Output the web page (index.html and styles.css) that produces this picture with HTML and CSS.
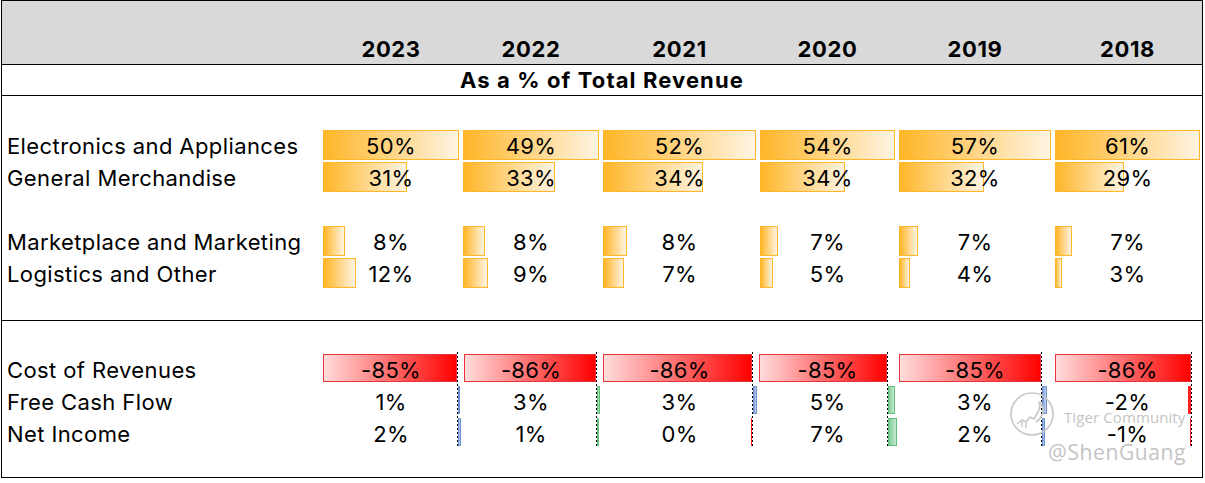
FILE: index.html
```html
<!DOCTYPE html>
<html>
<head>
<meta charset="utf-8">
<link rel="stylesheet" href="styles.css">
</head>
<body>
<div class="sheet">
  <div class="row head">
    <div class="lab"></div>
    <div class="yr">2023</div><div class="yr">2022</div><div class="yr">2021</div><div class="yr">2020</div><div class="yr">2019</div><div class="yr">2018</div>
  </div>
  <div class="row title">As a % of Total Revenue</div>
  <div class="row blank"></div>

  <div class="row">
    <div class="lab">Electronics and Appliances</div>
    <div class="cell"><div class="track"><div class="bar ob" style="width:100%"></div></div><span class="val">50%</span></div>
    <div class="cell"><div class="track"><div class="bar ob" style="width:100%"></div></div><span class="val">49%</span></div>
    <div class="cell"><div class="track"><div class="bar ob" style="width:100%"></div></div><span class="val">52%</span></div>
    <div class="cell"><div class="track"><div class="bar ob" style="width:100%"></div></div><span class="val">54%</span></div>
    <div class="cell"><div class="track"><div class="bar ob" style="width:100%"></div></div><span class="val">57%</span></div>
    <div class="cell"><div class="track"><div class="bar ob" style="width:100%"></div></div><span class="val">61%</span></div>
  </div>
  <div class="row">
    <div class="lab">General Merchandise</div>
    <div class="cell"><div class="track"><div class="bar ob" style="width:62%"></div></div><span class="val">31%</span></div>
    <div class="cell"><div class="track"><div class="bar ob" style="width:67.3%"></div></div><span class="val">33%</span></div>
    <div class="cell"><div class="track"><div class="bar ob" style="width:65.4%"></div></div><span class="val">34%</span></div>
    <div class="cell"><div class="track"><div class="bar ob" style="width:63%"></div></div><span class="val">34%</span></div>
    <div class="cell"><div class="track"><div class="bar ob" style="width:56.1%"></div></div><span class="val">32%</span></div>
    <div class="cell"><div class="track"><div class="bar ob" style="width:47.5%"></div></div><span class="val">29%</span></div>
  </div>
  <div class="row blank"></div>
  <div class="row">
    <div class="lab">Marketplace and Marketing</div>
    <div class="cell"><div class="track"><div class="bar ob" style="width:16%"></div></div><span class="val">8%</span></div>
    <div class="cell"><div class="track"><div class="bar ob" style="width:16.3%"></div></div><span class="val">8%</span></div>
    <div class="cell"><div class="track"><div class="bar ob" style="width:15.4%"></div></div><span class="val">8%</span></div>
    <div class="cell"><div class="track"><div class="bar ob" style="width:13%"></div></div><span class="val">7%</span></div>
    <div class="cell"><div class="track"><div class="bar ob" style="width:12.3%"></div></div><span class="val">7%</span></div>
    <div class="cell"><div class="track"><div class="bar ob" style="width:11.5%"></div></div><span class="val">7%</span></div>
  </div>
  <div class="row">
    <div class="lab">Logistics and Other</div>
    <div class="cell"><div class="track"><div class="bar ob" style="width:24%"></div></div><span class="val">12%</span></div>
    <div class="cell"><div class="track"><div class="bar ob" style="width:18.4%"></div></div><span class="val">9%</span></div>
    <div class="cell"><div class="track"><div class="bar ob" style="width:13.5%"></div></div><span class="val">7%</span></div>
    <div class="cell"><div class="track"><div class="bar ob" style="width:9.3%"></div></div><span class="val">5%</span></div>
    <div class="cell"><div class="track"><div class="bar ob" style="width:7%"></div></div><span class="val">4%</span></div>
    <div class="cell"><div class="track"><div class="bar ob" style="width:4.9%"></div></div><span class="val">3%</span></div>
  </div>
  <div class="row blank sep"></div>
  <div class="row blank short"></div>

  <div class="row">
    <div class="lab">Cost of Revenues</div>
    <div class="cell"><div class="track2"><div class="neg" style="width:136px"><div class="bar rb" style="width:134px"></div></div><div class="axis"></div><div class="pos"></div></div><span class="val">-85%</span></div>
    <div class="cell"><div class="track2"><div class="neg" style="width:135px"><div class="bar rb" style="width:132px"></div></div><div class="axis"></div><div class="pos"></div></div><span class="val">-86%</span></div>
    <div class="cell"><div class="track2"><div class="neg" style="width:151px"><div class="bar rb" style="width:149px"></div></div><div class="axis"></div><div class="pos"></div></div><span class="val">-86%</span></div>
    <div class="cell"><div class="track2"><div class="neg" style="width:129px"><div class="bar rb" style="width:128px"></div></div><div class="axis"></div><div class="pos"></div></div><span class="val">-85%</span></div>
    <div class="cell"><div class="track2"><div class="neg" style="width:144px"><div class="bar rb" style="width:142px"></div></div><div class="axis"></div><div class="pos"></div></div><span class="val">-85%</span></div>
    <div class="cell"><div class="track2"><div class="neg" style="width:138px"><div class="bar rb" style="width:136px"></div></div><div class="axis"></div><div class="pos"></div></div><span class="val">-86%</span></div>
  </div>
  <div class="row">
    <div class="lab">Free Cash Flow</div>
    <div class="cell"><div class="track2"><div class="neg" style="width:136px"></div><div class="axis"></div><div class="pos"><div class="bar bb" style="width:2px"></div></div></div><span class="val">1%</span></div>
    <div class="cell"><div class="track2"><div class="neg" style="width:135px"></div><div class="axis"></div><div class="pos"><div class="bar gb" style="width:3px"></div></div></div><span class="val">3%</span></div>
    <div class="cell"><div class="track2"><div class="neg" style="width:151px"></div><div class="axis"></div><div class="pos"><div class="bar bb" style="width:4px"></div></div></div><span class="val">3%</span></div>
    <div class="cell"><div class="track2"><div class="neg" style="width:129px"></div><div class="axis"></div><div class="pos"><div class="bar gb" style="width:7px"></div></div></div><span class="val">5%</span></div>
    <div class="cell"><div class="track2"><div class="neg" style="width:144px"></div><div class="axis"></div><div class="pos"><div class="bar bb" style="width:5px"></div></div></div><span class="val">3%</span></div>
    <div class="cell"><div class="track2"><div class="neg" style="width:138px"><div class="bar rs" style="width:3px"></div></div><div class="axis"></div><div class="pos"></div></div><span class="val">-2%</span></div>
  </div>
  <div class="row">
    <div class="lab">Net Income</div>
    <div class="cell"><div class="track2"><div class="neg" style="width:136px"></div><div class="axis"></div><div class="pos"><div class="bar bb" style="width:3px"></div></div></div><span class="val">2%</span></div>
    <div class="cell"><div class="track2"><div class="neg" style="width:135px"></div><div class="axis"></div><div class="pos"><div class="bar gb" style="width:1px"></div></div></div><span class="val">1%</span></div>
    <div class="cell"><div class="track2"><div class="neg" style="width:151px"><div class="bar rs" style="width:1px"></div></div><div class="axis"></div><div class="pos"></div></div><span class="val">0%</span></div>
    <div class="cell"><div class="track2"><div class="neg" style="width:129px"></div><div class="axis"></div><div class="pos"><div class="bar gb" style="width:9px"></div></div></div><span class="val">7%</span></div>
    <div class="cell"><div class="track2"><div class="neg" style="width:144px"></div><div class="axis"></div><div class="pos"><div class="bar bb" style="width:3px"></div></div></div><span class="val">2%</span></div>
    <div class="cell"><div class="track2"><div class="neg" style="width:138px"><div class="bar rs" style="width:1px"></div></div><div class="axis"></div><div class="pos"></div></div><span class="val">-1%</span></div>
  </div>
  <div class="row blank last"></div>

  <div class="watermark">
    <div class="wm-top">
      <svg class="wm-logo" width="48" height="48" viewBox="0 0 48 48">
        <circle cx="24" cy="24" r="21" fill="none" stroke="#c8c8c8" stroke-width="1.6"/>
        <path d="M9 34 L14 30 L18 32 L22 27 L26 29 L30 22 Q33 17 31 12 Q36 15 35 22 Q34 28 28 32" fill="none" stroke="#c8c8c8" stroke-width="1.6" stroke-linejoin="round"/>
        <path d="M14 30 L14 37 M18 32 L18 38" fill="none" stroke="#c8c8c8" stroke-width="1.4"/>
      </svg>
      <span class="wm-name">Tiger Community</span>
    </div>
    <div class="wm-user">@ShenGuang</div>
  </div>
</div>
</body>
</html>
```
FILE: styles.css
```css
* { box-sizing: border-box; }
html, body { margin: 0; padding: 0; background: #fff; }
body { font-family: Inter, "Noto Sans", sans-serif; color: #000; }

.sheet {
  position: relative;
  margin-left: 1px;
  width: 1202px;
  border: 1px solid #000;
}

.row {
  display: grid;
  grid-template-columns: 319px 140px 140px 157px 139px 156px 149px;
  height: 32px;
}

.head {
  height: 64px;
  background: #d9d9d9;
  border-bottom: 1px solid #000;
  align-items: end;
  padding-bottom: 3px;
}
.yr {
  text-align: center;
  font-weight: 700;
  font-size: 22px;
  letter-spacing: 0.6px;
  line-height: 24px;
}

.title {
  display: block;
  height: 31px;
  border-bottom: 1px solid #000;
  text-align: center;
  font-weight: 700;
  font-size: 22px;
  letter-spacing: 1.1px;
  line-height: 31px;
}

.sep { height: 33px; border-bottom: 1px solid #000; }
.short { height: 31px; }
.last { height: 29px; }

.lab {
  padding-left: 5px;
  padding-top: 2px;
  font-size: 22px;
  letter-spacing: 0.4px;
  line-height: 32px;
  white-space: nowrap;
}

.cell {
  display: grid;
  height: 32px;
}
.track, .track2, .val { grid-area: 1 / 1; }

.track {
  display: flex;
  padding: 2px;
}
.track2 {
  display: flex;
  height: 32px;
}
.neg {
  display: flex;
  justify-content: flex-end;
  padding: 2px 0;
  flex: none;
}
.axis {
  width: 1px;
  flex: none;
  background: repeating-linear-gradient(to bottom, #000 0 2px, transparent 2px 4px);
}
.pos {
  display: flex;
  flex: 1;
  padding: 2px 0;
}

.bar { height: 100%; flex: none; }
.ob {
  border: 1px solid #ffb628;
  background: linear-gradient(90deg, #ffb628 0%, #fff4e2 100%);
}
.rb {
  border: 1px solid #e8323c;
  background: linear-gradient(90deg, #ffdcdc 0%, #ff0000 100%);
}
.rs {
  background: #ff2020;
}
.bb {
  border: 1px solid #6f90d0;
  background: linear-gradient(90deg, #7c9bd8 0%, #c7d6f0 100%);
}
.gb {
  border: 1px solid #63be7b;
  background: linear-gradient(90deg, #7fcb92 0%, #c6ebd0 100%);
}

.val {
  align-self: center;
  text-align: center;
  font-size: 22px;
  letter-spacing: 0.3px;
  line-height: 32px;
  padding-top: 2px;
  position: relative;
}

.watermark {
  position: absolute;
  left: 1006px;
  top: 389px;
  color: #c4c4c4;
  font-family: "Open Sans", "Noto Sans", sans-serif;
  pointer-events: none;
}
.wm-top { display: flex; align-items: center; gap: 8px; }
.wm-name { font-size: 15px; letter-spacing: 0.1px; margin-top: 6px; }
.wm-user {
  margin-left: 40px;
  margin-top: 0;
  font-size: 21px;
  letter-spacing: 0.6px;
  text-shadow: 0 0 2px #fff;
}
```
